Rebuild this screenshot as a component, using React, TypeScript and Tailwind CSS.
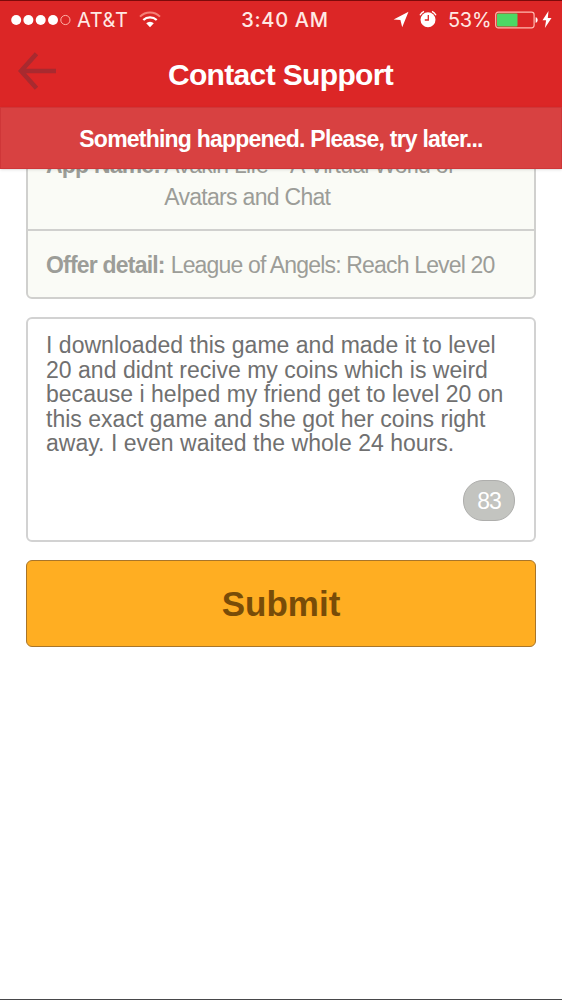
import type { ReactNode } from 'react'

const message = [
  'I downloaded this game and made it to level',
  '20 and didnt recive my coins which is weird',
  'because i helped my friend get to level 20 on',
  'this exact game and she got her coins right',
  'away. I even waited the whole 24 hours.'
]

function StatusBar() {
  return (
    <div className="flex h-[38px] items-center pl-[11px] pr-[10px] font-['Inter',sans-serif] text-[20px] text-[#ffe9e4]">
      <div className="flex flex-1 items-center">
        <svg width="60" height="12" viewBox="0 0 60 12" className="-mt-px shrink-0">
          {[5.2, 17.4, 29.7, 42].map((cx) => (
            <circle key={cx} cx={cx} cy="6" r="5" fill="#fff" />
          ))}
          <circle cx="54.4" cy="6" r="4.6" fill="none" stroke="#ffb3a8" strokeWidth="1" />
        </svg>
        <span className="ml-[6px] w-[52px] whitespace-nowrap tracking-[0.6px]">AT&amp;T</span>
        <svg width="22" height="17" viewBox="0 0 22 17" className="-mt-[2px] ml-[10px]" fill="none">
          <path d="M1 5.6a14.2 14.2 0 0 1 20 0" stroke="#f58078" strokeWidth="2" />
          <path d="M4.3 9a9.6 9.6 0 0 1 13.4 0" stroke="#fff" strokeWidth="2.2" />
          <path d="M7.2 12.3a5.4 5.4 0 0 1 7.6 0L11 16.2z" fill="#fff" />
        </svg>
      </div>
      <span className="ml-[7px] whitespace-nowrap font-medium tracking-[0.7px]">3:40 AM</span>
      <div className="flex flex-1 items-center justify-end">
        <svg width="16" height="17" viewBox="0 0 16 17" fill="#fff" className="-mt-[2px]">
          <path d="M15.5.8.6 8.4 7.4 9l1.8 7.2z" />
        </svg>
        <svg width="18" height="18" viewBox="0 0 18 18" className="-mt-[2px] ml-[10px]">
          <circle cx="9" cy="9.8" r="7.5" fill="#fff" />
          <path d="M1 5.2A9 9 0 0 1 5 1.3M17 5.2a9 9 0 0 0-4-3.9" fill="none" stroke="#fff" strokeWidth="1.4" />
          <path d="M9.3 5v5H5.8" fill="none" stroke="#dc2626" strokeWidth="1.3" />
        </svg>
        <span className="ml-[11px] w-[44px] whitespace-nowrap tracking-[-0.3px]">53%</span>
        <svg width="44" height="18" viewBox="0 0 44 18" className="-mt-px ml-[3px]">
          <rect x=".7" y="1.2" width="38.4" height="15.6" rx="2.5" fill="none" stroke="#ffb9b0" strokeWidth="1.2" />
          <rect x="2" y="2.6" width="20.5" height="12.8" rx="1" fill="#4cd964" />
          <path d="M40.6 6.2c2.7.4 2.7 5.2 0 5.6z" fill="#fff" />
        </svg>
        <svg width="10" height="17" viewBox="0 0 9 17" className="-mt-px ml-[3px]" fill="#fff">
          <path d="M6 0 0 9.3h3.6L2.4 17 9 7H5.3z" />
        </svg>
      </div>
    </div>
  )
}

function Header() {
  return (
    <header className="h-[107px] border-t border-[#7d0a0a] bg-[#dc2626]">
      <StatusBar />
      <div className="flex h-[68px] items-center pl-[18px] pr-[57px]">
        <button aria-label="Back" className="-mt-[4px]">
          <svg width="38" height="38" viewBox="0 0 38 38" fill="none" stroke="#a82a2f" strokeWidth="4.6">
            <path d="M18.5 1.8 3 19l15.5 17.2M3 19h35" />
          </svg>
        </button>
        <h1 className="mt-[4px] flex-1 whitespace-nowrap text-center text-[30px] font-bold leading-none tracking-[-0.65px] text-white">
          Contact Support
        </h1>
      </div>
    </header>
  )
}

function DetailRow({ label, children }: { label: string; children: ReactNode }) {
  return (
    <div className="flex whitespace-nowrap text-[23px] leading-[31.5px] text-[#9c9d98]">
      <span className="font-bold tracking-[-0.8px]">{label}</span>
      <span className="ml-[6px] tracking-[-0.83px]">{children}</span>
    </div>
  )
}

export default function App() {
  return (
    <div className="flex h-[1000px] w-[562px] flex-col overflow-hidden border-b border-[#48484a] bg-white font-['Liberation_Sans',Arial,sans-serif]">
      <Header />
      <div className="z-10 flex h-[62px] shrink-0 items-center justify-center border border-[#cf3638] bg-[#d84141] pt-[2px] shadow-sm">
        <p className="whitespace-nowrap text-[23px] font-bold tracking-[-0.78px] text-white">
          Something happened. Please, try later...
        </p>
      </div>

      <main className="flex-1 overflow-hidden px-[26px]">
        {/* Offer info, scrolled under the banner */}
        <section className="-mt-[32px] h-[162px] rounded-md border-2 border-[#d0d0ce] bg-[#fafbf6]">
          <div className="flex h-[92px] flex-col justify-end border-b-2 border-[#d0d0ce] px-[18px] pb-[16px]">
            <DetailRow label="App Name:">
              <span className="-ml-[2px] block tracking-[-0.75px]">
                Avakin Life – A Virtual World of
              </span>
              <span className="-ml-[2px] block tracking-[-0.7px]">Avatars and Chat</span>
            </DetailRow>
          </div>
          <div className="flex h-[66px] items-center px-[18px] pt-[4px]">
            <DetailRow label="Offer detail:">League of Angels: Reach Level 20</DetailRow>
          </div>
        </section>

        <section className="mt-[18px] flex h-[225px] flex-col justify-between rounded-md border-2 border-[#d2d2d2] bg-white pb-[19px] pl-[18px] pr-[19px] pt-[14px]">
          <p className="whitespace-nowrap text-[23px] leading-[24.6px] tracking-[0.02px] text-[#707070]">
            {message.map((line) => (
              <span key={line} className="block">
                {line}
              </span>
            ))}
          </p>
          <span className="flex h-[41px] w-[52px] items-center justify-center self-end rounded-[20px] border border-[#aeaeac] bg-[#c3c4c0] pt-px text-[23px] tracking-[-1px] text-white">
            83
          </span>
        </section>

        <button className="mt-[18px] flex h-[87px] w-full items-center justify-center rounded-md border border-[#a8752a] bg-[#ffae22] pt-px text-[35px] font-bold text-[#784c08]">
          Submit
        </button>
      </main>
    </div>
  )
}
